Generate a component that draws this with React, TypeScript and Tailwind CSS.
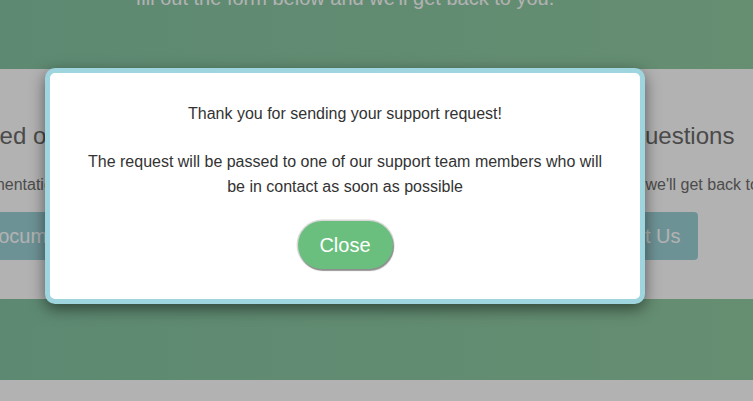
export default function App() {
  return (
    <div className="relative h-[401px] w-full overflow-hidden bg-white font-['Liberation_Sans',Arial,sans-serif]">
      {/* page behind the dialog */}
      <section className="flex h-[69px] flex-col bg-linear-to-r from-[#86c5a4] to-[#92cca3]">
        <div className="ml-[-235px] w-[1160px] text-center">
          <p className="-mt-4 text-[20px] leading-7 text-white">
            fill out the form below and we'll get back to you.
          </p>
        </div>
      </section>

      <section className="h-[230px] bg-white">
        <div className="ml-[-239px] grid w-[1160px] grid-cols-2 pt-[51px] text-center">
          <div className="flex flex-col items-center">
            <h2 className="text-[24px] leading-8 text-[#6a6a6a]">Need our help?</h2>
            <p className="mt-[21px] whitespace-nowrap text-[16px] leading-6 text-[#6e6e6e]">
              Read our documentation for all quick answers.
            </p>
            <button className="mt-[15px] rounded-[4px] bg-[#9dd2d6] px-[18px] py-[10px] text-[20px] leading-7 text-white">
              Documentation
            </button>
          </div>
          <div className="flex flex-col items-center">
            <h2 className="text-[24px] leading-8 text-[#6a6a6a]">Still have questions</h2>
            <p className="mt-[21px] whitespace-nowrap text-[16px] leading-6 text-[#6e6e6e]">
              Send us a message and we'll get back to you.
            </p>
            <button className="mt-[15px] rounded-[4px] bg-[#9dd2d6] px-[18px] py-[10px] text-[20px] leading-7 text-white">
              Contact Us
            </button>
          </div>
        </div>
      </section>

      <section className="h-[81px] bg-linear-to-r from-[#86c5a4] to-[#92cca3]" />
      <section className="h-[40px] bg-white" />

      {/* overlay */}
      <div className="absolute inset-0 bg-black/30" />

      {/* dialog */}
      <div className="absolute left-[45px] top-[68px] w-[600px] rounded-[10px] border-[5px] border-[#9ed5df] bg-white px-[30px] pb-[30px] pt-[28px] text-center text-[16px] leading-[25px] text-[#333] shadow-[0_5px_15px_rgba(0,0,0,0.5)]">
        <p>Thank you for sending your support request!</p>
        <p className="mt-[23px]">
          The request will be passed to one of our support team members who will be in contact as soon as possible
        </p>
        <div className="mt-[22px] flex justify-center">
          <button className="h-[48px] w-[95px] rounded-full bg-[#6abf7e] text-[20px] text-white shadow-[1px_2px_1px_rgba(0,0,0,0.35),0_0_0_1.5px_rgba(0,0,0,0.15)]">
            Close
          </button>
        </div>
      </div>
    </div>
  );
}
